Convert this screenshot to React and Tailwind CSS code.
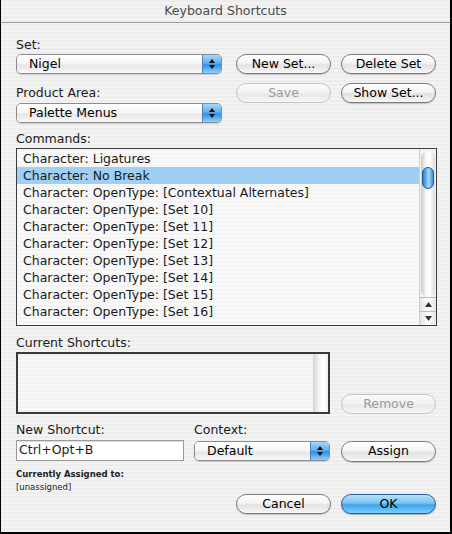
import React from 'react';

const font = "font-['DejaVu_Sans',sans-serif]";

function AquaButton({ children, disabled, primary, className = '' }) {
  const base = 'flex h-[20px] w-[95px] items-center justify-center rounded-full border text-[12.5px] leading-none';
  if (primary) {
    return (
      <div className={`${base} border-[#2a5f9e] bg-[linear-gradient(180deg,#b9e0fb_0%,#7cc4f3_45%,#3ea3ec_55%,#79d0fb_100%)] text-black shadow-[0_1px_1px_rgba(0,0,0,0.3)] ${className}`}>
        {children}
      </div>
    );
  }
  if (disabled) {
    return (
      <div className={`${base} border-[#c4c4c4] bg-[linear-gradient(180deg,#fbfbfb_0%,#f1f1f1_50%,#e8e8e8_55%,#f6f6f6_100%)] text-[#9a9a9a] ${className}`}>
        {children}
      </div>
    );
  }
  return (
    <div className={`${base} border-[#7a7a7a] bg-[linear-gradient(180deg,#ffffff_0%,#f4f4f4_45%,#e2e2e2_55%,#f7f7f7_100%)] text-black shadow-[0_1px_1px_rgba(0,0,0,0.2)] ${className}`}>
      {children}
    </div>
  );
}

function Popup({ label, className = '' }) {
  return (
    <div className={`flex h-[20px] overflow-hidden rounded-[5px] border border-[#8c8c8c] shadow-[0_1px_1px_rgba(0,0,0,0.15)] ${className}`}>
      <div className="flex flex-1 items-center bg-[linear-gradient(180deg,#ffffff_0%,#f5f5f5_50%,#e6e6e6_55%,#f8f8f8_100%)] pl-[12px] text-[12.5px] text-black">
        {label}
      </div>
      <div className="flex w-[19px] flex-col items-center justify-center gap-[2px] border-l border-[#4b83bd] bg-[linear-gradient(180deg,#a9d6f7_0%,#5fb0ee_45%,#2f8ee3_55%,#8ed2fb_100%)]">
        <svg width="6" height="4" viewBox="0 0 6 4"><path d="M3 0 L6 4 L0 4 Z" fill="#111" /></svg>
        <svg width="6" height="4" viewBox="0 0 6 4"><path d="M0 0 L6 0 L3 4 Z" fill="#111" /></svg>
      </div>
    </div>
  );
}

const commands = [
  'Character: Ligatures',
  'Character: No Break',
  'Character: OpenType: [Contextual Alternates]',
  'Character: OpenType: [Set 10]',
  'Character: OpenType: [Set 11]',
  'Character: OpenType: [Set 12]',
  'Character: OpenType: [Set 13]',
  'Character: OpenType: [Set 14]',
  'Character: OpenType: [Set 15]',
  'Character: OpenType: [Set 16]',
];

export default function App() {
  return (
    <div className={`${font} h-[534px] w-[452px] overflow-hidden border-b-2 border-l border-r-2 border-black bg-[repeating-linear-gradient(180deg,#ededed_0px,#ededed_2px,#f3f3f3_2px,#f3f3f3_4px)] text-[12.5px] text-[#1a1a1a]`}>
      {/* title bar */}
      <div className="flex h-[23px] items-center justify-center border-b border-[#9c9c9c] text-[12.5px] text-[#4a4a4a]">
        Keyboard Shortcuts
      </div>

      <div className="pl-[15px] pr-[14px]">
        {/* set / product area */}
        <div className="flex">
          <div className="w-[206px]">
            <div className="mt-[14px] h-[16px] leading-[16px]">Set:</div>
            <Popup label="Nigel" className="mt-[1px]" />
            <div className="mt-[11px] h-[16px] leading-[16px]">Product Area:</div>
            <Popup label="Palette Menus" className="mt-[2px]" />
          </div>
          <div className="ml-[14px] mt-[31px] grid grid-cols-[95px_95px] gap-x-[10px] gap-y-[9px] self-start">
            <AquaButton>New Set...</AquaButton>
            <AquaButton>Delete Set</AquaButton>
            <AquaButton disabled>Save</AquaButton>
            <AquaButton>Show Set...</AquaButton>
          </div>
        </div>

        {/* commands */}
        <div className="mt-[8px] h-[16px] leading-[16px]">Commands:</div>
        <div className="mt-[1px] flex h-[178px] w-[421px] border border-[#3c3c3c] bg-[repeating-linear-gradient(180deg,#f4f4f4_0px,#f4f4f4_2px,#fafafa_2px,#fafafa_4px)]">
          <div className="flex-1 pt-[1px]">
            {commands.map((c, i) => (
              <div
                key={c}
                className={`h-[17px] pl-[6px] leading-[17px] ${i === 1 ? 'bg-[#9fd0f3]' : ''}`}
              >
                {c}
              </div>
            ))}
          </div>
          {/* scrollbar */}
          <div className="flex w-[17px] flex-col border-l border-[#d0d0d0] bg-[#f2f2f2]">
            <div className="relative mx-[1px] mt-[2px] flex-1 rounded-t-full rounded-b-full bg-[linear-gradient(90deg,#c9c9c9_0%,#f6f6f6_35%,#ffffff_60%,#dcdcdc_100%)]">
              <div className="absolute left-[1px] right-[1px] top-[16px] h-[22px] rounded-full border border-[#1d5aa4] bg-[linear-gradient(90deg,#2a7ad6_0%,#6fb8f2_35%,#a8dafb_55%,#3b8fe2_100%)]" />
            </div>
            <div className="flex h-[14px] items-center justify-center border-t border-[#bdbdbd] bg-[linear-gradient(90deg,#e4e4e4,#ffffff,#e4e4e4)]">
              <svg width="7" height="5" viewBox="0 0 7 5"><path d="M3.5 0 L7 5 L0 5 Z" fill="#333" /></svg>
            </div>
            <div className="flex h-[14px] items-center justify-center border-t border-[#bdbdbd] bg-[linear-gradient(90deg,#e4e4e4,#ffffff,#e4e4e4)]">
              <svg width="7" height="5" viewBox="0 0 7 5"><path d="M0 0 L7 0 L3.5 5 Z" fill="#333" /></svg>
            </div>
          </div>
        </div>

        {/* current shortcuts */}
        <div className="mt-[9px] h-[16px] leading-[16px]">Current Shortcuts:</div>
        <div className="mt-[1px] flex items-end">
          <div className="flex h-[62px] w-[314px] border-2 border-[#3a3a3a] bg-[repeating-linear-gradient(180deg,#f1f1f1_0px,#f1f1f1_2px,#f7f7f7_2px,#f7f7f7_4px)]">
            <div className="flex-1" />
            <div className="w-[15px] bg-[linear-gradient(90deg,#d6d6d6_0%,#f4f4f4_40%,#ffffff_70%,#eeeeee_100%)]" />
          </div>
          <AquaButton disabled className="mb-0 ml-[11px]">Remove</AquaButton>
        </div>

        {/* new shortcut / context */}
        <div className="mt-[8px] flex">
          <div className="w-[178px]">
            <div className="h-[16px] leading-[16px]">New Shortcut:</div>
            <div className="mt-[2px] flex h-[21px] w-[168px] items-center border border-[#9a9a9a] bg-white pl-[2px] shadow-[inset_0_1px_1px_rgba(0,0,0,0.15)]">
              Ctrl+Opt+B
            </div>
          </div>
          <div className="w-[136px]">
            <div className="h-[16px] leading-[16px]">Context:</div>
            <Popup label="Default" className="mt-[3px]" />
          </div>
          <div className="ml-[11px] mt-[19px]">
            <AquaButton className="h-[21px]">Assign</AquaButton>
          </div>
        </div>

        {/* bottom */}
        <div className="flex">
          <div className="w-[220px]">
            <div className="mt-[6px] text-[8.5px] font-bold leading-[12px] text-[#222]">Currently Assigned to:</div>
            <div className="mt-[1px] text-[8.5px] leading-[12px] text-[#222]">[unassigned]</div>
          </div>
          <div className="mt-[32px] flex gap-[10px] pl-[0px]">
            <AquaButton>Cancel</AquaButton>
            <AquaButton primary>OK</AquaButton>
          </div>
        </div>
      </div>
    </div>
  );
}
